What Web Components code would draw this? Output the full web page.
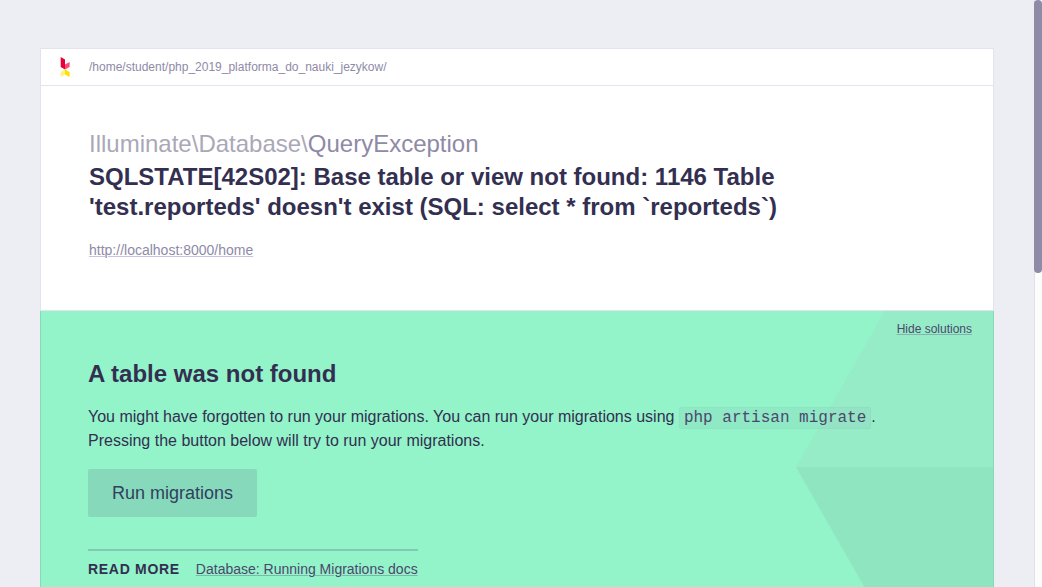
<!DOCTYPE html>
<html lang="en">
<head>
<meta charset="utf-8">
<meta name="viewport" content="width=device-width, initial-scale=1">
<title>Illuminate\Database\QueryException</title>
<style>
html, body { margin: 0; }
body {
  font: 16px/24px "Liberation Sans", Arial, sans-serif;
  color: #332f51;
  background: #edeef4;
  --muted: #8e8aa7;
  --soft: #aaa8b8;
  --line: #e3e2ee;
  --accent: #93f3c9;
}
</style>
</head>
<body>
<app-shell>
  <error-card>
    <source-bar slot="header">/home/student/php_2019_platforma_do_nauki_jezykow/</source-bar>
    <exception-summary>
      <span slot="namespace">Illuminate\Database\</span>
      <span slot="name">QueryException</span>
      <span slot="message">SQLSTATE[42S02]: Base table or view not found: 1146 Table 'test.reporteds' doesn't exist (SQL: select * from `reporteds`)</span>
      <text-link slot="url" href="http://localhost:8000/home">http://localhost:8000/home</text-link>
    </exception-summary>
  </error-card>
  <solution-panel>
    <span slot="title">A table was not found</span>
    <span slot="description"><span>You might have forgotten to run your migrations. You can run your migrations using </span><inline-code>php artisan migrate</inline-code><span>.</span> <span>Pressing the button below will try to run your migrations.</span></span>
    <span slot="action">Run migrations</span>
    <text-link slot="links" href="https://laravel.com/docs/master/migrations#running-migrations">Database: Running Migrations docs</text-link>
  </solution-panel>
</app-shell>

<script>
function define(name, html) {
  const template = document.createElement('template');
  template.innerHTML = html;
  customElements.define(name, class extends HTMLElement {
    constructor() {
      super();
      this.attachShadow({ mode: 'open' }).append(template.content.cloneNode(true));
    }
  });
}

define('app-shell', `
<style>
  :host { display: flex; height: 100vh; overflow: hidden; }
  main { flex: 1; min-width: 0; display: flex; flex-direction: column; padding: 48px 40px 0; box-sizing: border-box; }
  .track { flex: none; width: 8px; box-sizing: border-box; background: #fcfcfd; box-shadow: inset 1px 0 #e1e1e8; }
  .thumb { height: 46.5%; border-radius: 4px; background: #8e8aa7; }
</style>
<main><slot></slot></main>
<div class="track"><div class="thumb"></div></div>`);

define('error-card', `
<style>
  :host { display: block; flex: none; background: #fff; border: 1px solid var(--line); }
</style>
<slot name="header"></slot><slot></slot>`);

define('brand-mark', `
<style>
  :host { display: block; width: 10px; height: 20px; }
  svg { display: block; }
</style>
<svg width="10" height="20" viewBox="0 0 10 20" aria-hidden="true">
  <path fill="#e6003a" d="M.7 0 5 2.5V12.5L.7 10z"/>
  <path fill="#ff4a78" d="M9.6 4.9V9.9L5 12.5V7.5z"/>
  <path fill="#fff080" d="M5 12.5V17.4L.7 19.9V15z"/>
  <path fill="#ffe100" d="M5 12.5 9.6 15V20L5 17.4z"/>
</svg>`);

define('source-bar', `
<style>
  :host { display: flex; align-items: center; height: 36px; padding: 0 19px; border-bottom: 1px solid var(--line); font-size: 12px; line-height: 18px; color: var(--muted); }
  .path { margin-left: 19px; }
</style>
<brand-mark></brand-mark><div class="path"><slot></slot></div>`);

define('text-link', `
<style>
  :host { display: inline-block; font-size: 14px; line-height: 20px; }
  a { color: inherit; text-decoration: underline; text-decoration-color: var(--underline, #c8c3dd); text-decoration-thickness: 1px; text-underline-offset: 1px; }
</style>
<a><slot></slot></a>`);

define('exception-summary', `
<style>
  :host { display: block; padding: 43px 48px 50px; }
  .class { font-size: 24px; line-height: 30px; color: var(--soft); display: flex; flex-wrap: wrap; }
  .name { color: var(--muted); }
  h1 { margin: 3px 0 0; font-size: 24px; line-height: 30px; max-width: 720px; }
  .url { display: flex; margin-top: 18px; color: var(--muted); }
</style>
<div class="class"><slot name="namespace"></slot><span class="name"><slot name="name"></slot></span></div>
<h1><slot name="message"></slot></h1>
<div class="url"><slot name="url"></slot></div>`);

define('inline-code', `
<style>
  :host { display: inline; }
  code { font: 16px/20px "Liberation Mono", "Courier New", monospace; padding: 1px 4px; border: 1px solid rgba(110, 110, 160, .05); border-radius: 2px; background: rgba(110, 110, 160, .07); color: #4b476d; }
</style>
<code><slot></slot></code>`);

define('solution-panel', `
<style>
  :host { position: relative; display: block; flex: 1 0 auto; background: var(--accent); border: solid #86d9bb; border-width: 0 1px; --underline: #7fb5aa; }
  .facets { position: absolute; top: 0; right: 0; }
  .content { position: relative; padding: 0 47px 8px; }
  .toggle { position: absolute; top: 8px; right: 21px; padding: 0; border: 0; background: none; font: 12px/20px "Liberation Sans", Arial, sans-serif; color: #4b476d; text-decoration: underline; text-decoration-color: var(--underline); text-underline-offset: 1px; }
  h2 { margin: 0; padding-top: 48px; font-size: 24px; line-height: 30px; }
  p { margin: 16px 0; max-width: 800px; }
  .run { display: block; height: 48px; padding: 0 24px; border: 0; border-radius: 2px; background: #87d9bc; color: #323f5e; font: 18px/24px "Liberation Sans", Arial, sans-serif; }
  .more { display: inline-flex; align-items: baseline; gap: 16px; margin-top: 32px; padding-top: 8px; border-top: 2px solid #80c9b3; color: #4b476d; }
  h3 { margin: 0; font-size: 14px; line-height: 20px; letter-spacing: 0.05em; color: #332f51; }
</style>
<svg class="facets" width="197" height="312" viewBox="0 0 197 312" aria-hidden="true">
  <path fill="#96ecc7" d="M89 0H197V156H0z"/>
  <path fill="#8ee5bf" d="M0 156H197V312H89z"/>
</svg>
<div class="content">
  <button class="toggle" type="button">Hide solutions</button>
  <h2><slot name="title"></slot></h2>
  <p><slot name="description"></slot></p>
  <button class="run" type="button"><slot name="action"></slot></button>
  <div class="more"><h3>READ MORE</h3><slot name="links"></slot></div>
</div>`);

for (const link of document.querySelectorAll('text-link')) {
  link.shadowRoot.querySelector('a').href = link.getAttribute('href');
}
</script>
</body>
</html>
